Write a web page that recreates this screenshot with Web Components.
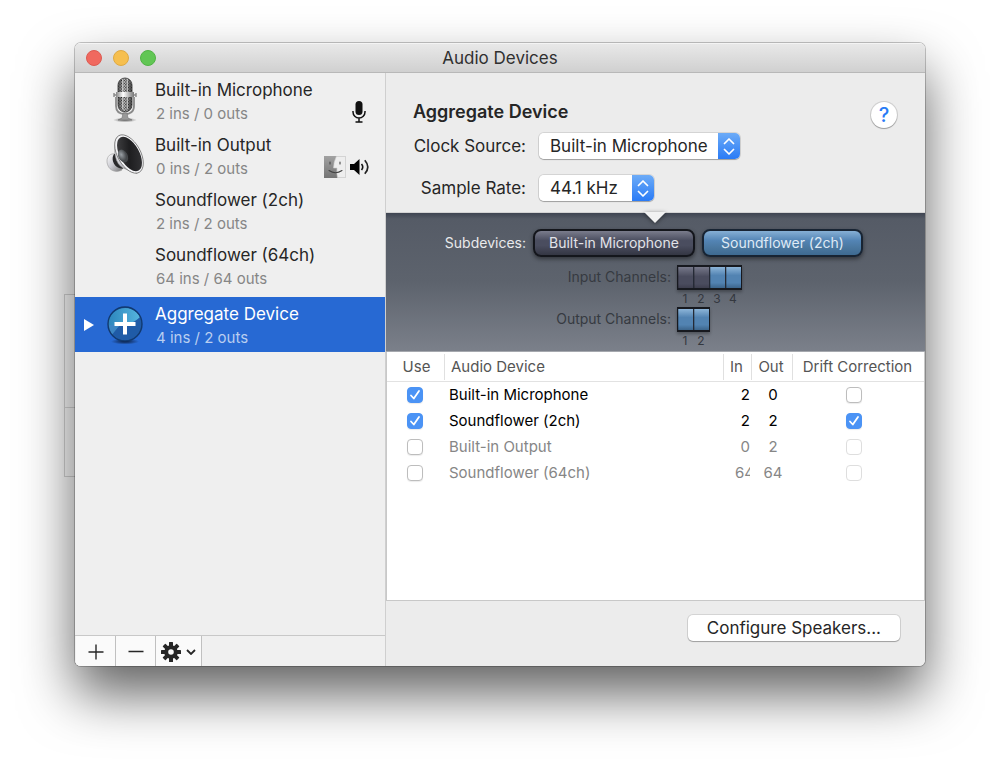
<!DOCTYPE html>
<html lang="en">
<head>
<meta charset="utf-8">
<meta name="viewport" content="width=device-width, initial-scale=1">
<title>Audio Devices</title>
<style>
  html { background: #fff; }
  body {
    margin: 0; box-sizing: border-box; min-height: 100vh;
    padding: 43px 75px 107px; display: flex;
    font-family: Inter, "Liberation Sans", sans-serif; font-size: 17px; line-height: 24px; color: #262626;
  }
</style>
</head>
<body>
<audio-window heading="Audio Devices">
  <device-list slot="sidebar">
    <device-item name="Built-in Microphone" detail="2 ins / 0 outs">
      <ui-icon slot="icon" name="studio-mic"></ui-icon>
      <ui-icon slot="status" name="mic"></ui-icon>
    </device-item>
    <device-item name="Built-in Output" detail="0 ins / 2 outs">
      <ui-icon slot="icon" name="speaker"></ui-icon>
      <ui-icon slot="status" name="face"></ui-icon>
      <ui-icon slot="status" name="volume"></ui-icon>
    </device-item>
    <device-item name="Soundflower (2ch)" detail="2 ins / 2 outs"></device-item>
    <device-item name="Soundflower (64ch)" detail="64 ins / 64 outs"></device-item>
    <device-item name="Aggregate Device" detail="4 ins / 2 outs" selected>
      <ui-icon slot="icon" name="aggregate"></ui-icon>
    </device-item>
  </device-list>
  <list-toolbar slot="sidebar"></list-toolbar>

  <device-settings slot="main" heading="Aggregate Device"></device-settings>
  <subdevice-panel slot="main"></subdevice-panel>
  <device-table slot="main"></device-table>
  <action-footer slot="main">Configure Speakers...</action-footer>
</audio-window>

<script>
const define = (name, render) => customElements.define(name, class extends HTMLElement {
  constructor() { super(); this.attachShadow({ mode: "open" }); }
  connectedCallback() { this.shadowRoot.innerHTML = render(this); }
});

/* Icons */
const gearTeeth = Array.from({ length: 8 }, (_, i) =>
  `<rect x="8" y="0" width="4" height="5" rx=".6" transform="rotate(${i * 45} 10 10)"/>`).join("");
const icons = {
  "studio-mic": [24, 48, `
    <defs>
      <linearGradient id="m"><stop offset="0" stop-color="#555"/><stop offset=".45" stop-color="#c8c8c8"/><stop offset="1" stop-color="#484848"/></linearGradient>
      <linearGradient id="b"><stop offset="0" stop-color="#888"/><stop offset=".4" stop-color="#fff"/><stop offset="1" stop-color="#777"/></linearGradient>
      <pattern id="d" width="2" height="2" patternUnits="userSpaceOnUse" patternTransform="rotate(45)"><rect width="1.1" height="1.1" fill="#222"/></pattern>
      <radialGradient id="s"><stop offset="0" stop-color="#444" stop-opacity=".8"/><stop offset="1" stop-color="#444" stop-opacity="0"/></radialGradient>
    </defs>
    <ellipse cx="12" cy="43" rx="12" ry="2.4" fill="url(#s)"/>
    <path d="M3 20v9c0 6 4 8 9 8s9-2 9-8v-9" fill="none" stroke="#8a8a8a" stroke-width="1.8"/>
    <path d="M10 36h4l1 5 4 2H5l4-2z" fill="#999" stroke="#666" stroke-width=".5"/>
    <rect x="5" y="1" width="14" height="34" rx="7" fill="url(#m)" stroke="#555"/>
    <rect x="5" y="1" width="14" height="34" rx="7" fill="url(#d)"/>
    <path d="M9.5 2v30M14.5 2v30" stroke="#ddd" stroke-width=".7"/>
    <rect x="3" y="15" width="18" height="5" fill="url(#b)"/>
    <path d="M1 16v4M23 16v4M1 18h2M21 18h2" stroke="#888" stroke-width="1.4"/>`],
  speaker: [38, 46, `
    <defs>
      <linearGradient id="r" x2="1" y2="1"><stop offset="0" stop-color="#fff"/><stop offset=".5" stop-color="#c9c9d0"/><stop offset="1" stop-color="#777"/></linearGradient>
      <linearGradient id="k" x2="1" y2="1"><stop offset="0" stop-color="#4b4b4d"/><stop offset=".5" stop-color="#1e1e20"/><stop offset="1" stop-color="#38383b"/></linearGradient>
      <radialGradient id="c" cx=".4" cy=".35"><stop offset="0" stop-color="#9aa0a5"/><stop offset="1" stop-color="#45484b"/></radialGradient>
    </defs>
    <path d="M9 21c-4-1-8 2-8 7s3 9 7 10c3 1 6 0 8-1l-4-14z" fill="url(#r)" stroke="#999" stroke-width=".6"/>
    <path d="M8 21c-3 4-1 12 5 14l4 1-4-15z" fill="#29292b"/>
    <path d="M10 6C7 18 9 31 17 35l14 5.500L14 2z" fill="url(#r)" stroke="#777" stroke-width=".5"/>
    <ellipse cx="23" cy="21" rx="11.500" ry="21" transform="rotate(-29 23 21)" fill="#f3f3f5" stroke="#777" stroke-width=".8"/>
    <ellipse cx="23.500" cy="21" rx="9.700" ry="18.800" transform="rotate(-29 23.500 21)" fill="url(#k)"/>
    <ellipse cx="17" cy="23" rx="4.600" ry="6.800" transform="rotate(-28 17 23)" fill="url(#c)"/>`],
  aggregate: [38, 40, `
    <defs>
      <linearGradient id="h" x2="1" y2="0"><stop offset="0" stop-color="#2c85bc"/><stop offset="1" stop-color="#55b5de"/></linearGradient>
      <radialGradient id="s"><stop offset="0" stop-color="#08152f" stop-opacity=".9"/><stop offset="1" stop-color="#08152f" stop-opacity="0"/></radialGradient>
    </defs>
    <ellipse cx="19" cy="36.5" rx="14" ry="3" fill="url(#s)"/>
    <circle cx="19" cy="19" r="17" fill="#1f5ba7"/>
    <path d="M2 20a17 17 0 0 1 32-8Q29 17 24 18T14 21z" fill="url(#h)"/>
    <path d="M2 20h12Q8 27 6 30 2 25 2 20" fill="#3b86c4"/>
    <circle cx="19" cy="19" r="17" fill="none" stroke="#11396f" stroke-width="1.4"/>
    <path d="M19 8.500v21M8.500 19h21" stroke="#fff" stroke-width="4"/>`],
  mic: [20, 22, `<g transform="translate(2)"><rect x="3.500" y="0" width="7" height="14" rx="3.500" fill="#111"/>
    <path d="M1 10v1a6 6 0 0 0 12 0v-1M7 17v3.500M3.500 21h7" fill="none" stroke="#111" stroke-width="1.5"/></g>`],
  face: [22, 22, `<defs><linearGradient id="f" x2="0" y2="1"><stop offset="0" stop-color="#a2a2a2"/><stop offset="1" stop-color="#747474"/></linearGradient></defs>
    <rect x=".5" y=".5" width="21" height="21" fill="#eee" stroke="#d4d4d4"/>
    <path d="M0 0h12.500Q9.500 6 9.500 12H13q-.5 4 .5 10H0z" fill="url(#f)"/>
    <path d="M12.500 0Q9.500 6 9.500 12H13q-.5 5 .5 10" fill="none" stroke="#ccc" stroke-width=".6"/>
    <path d="M6 6v2M16 6v2M5 14.500q6.500 4.500 13 0" fill="none" stroke="#444" stroke-width="1.1" stroke-linecap="round"/>`],
  volume: [20, 16, `<path d="M0 5h4l5.500-5v16L4 11H0z" fill="#050505"/>
    <path d="M11.500 5q2.500 3 0 6" fill="none" stroke="#111" stroke-width="1.600"/>
    <path d="M14.800 1.200q6 6.800 0 13.600" fill="none" stroke="#222" stroke-width="1.700"/>`],
  add: [16, 16, `<path d="M8 .5v15M.5 8h15" stroke="#262626" stroke-width="1.400"/>`],
  remove: [16, 16, `<path d="M.5 7.500h15" stroke="#262626" stroke-width="1.400"/>`],
  gear: [20, 20, `<g fill="#262626">${gearTeeth}</g><circle cx="10" cy="10" r="4.800" fill="none" stroke="#262626" stroke-width="4"/>`],
  down: [10, 6, `<path d="M1 1l4 4 4-4" fill="none" stroke="#262626" stroke-width="1.800"/>`],
  disclosure: [10, 12, `<path d="M0 0l10 6-10 6z" fill="#fff"/>`],
  updown: [12, 17, `<path d="M1.500 5.500L6 1l4.500 4.500M1.500 11.500L6 16l4.500-4.500" fill="none" stroke="#fff" stroke-width="1.700" stroke-linecap="round" stroke-linejoin="round"/>`]
};
define("ui-icon", el => {
  const [w, h, body] = icons[el.getAttribute("name")];
  return `<style>:host{display:block;flex:none;width:${w}px;height:${h}px}svg{display:block}</style>
    <svg width="${w}" height="${h}" viewBox="0 0 ${w} ${h}" aria-hidden="true">${body}</svg>`;
});

/* Window frame */
define("audio-window", el => `
  <style>
    :host { display: flex; flex-direction: column; flex: 1; min-width: 0; position: relative; }
    .behind { position: absolute; z-index: -1; left: -11px; top: 251px; width: 60px; height: 183px; box-sizing: border-box; border: 1px solid rgba(0,0,0,.16); }
    .behind::after { content: ""; display: block; height: 112px; border-bottom: 1px solid rgba(0,0,0,.14); }
    .frame { flex: 1; display: flex; flex-direction: column; border-radius: 6px; overflow: hidden; background: #ececec; }
    .shade { position: absolute; inset: 0; z-index: -2; border-radius: 6px; box-shadow: 0 0 0 1px rgba(0,0,0,.22), 0 28px 54px rgba(0,0,0,.62); }
    header { display: grid; grid-template-columns: 1fr auto 1fr; align-items: center; height: 29px; padding: 0 11px; border-bottom: 1px solid #b8b8b8;
      background: linear-gradient(#e9e9e9, #d0d0d0); box-shadow: inset 0 1px #f4f4f4; }
    .lights { display: flex; gap: 11px; }
    .lights button { width: 16px; height: 16px; padding: 0; border-radius: 50%; border: 1px solid #dd5a51; background: #f0695f; }
    .lights button:nth-child(2) { border-color: #dfaa43; background: #f6bf4f; }
    .lights button:nth-child(3) { border-color: #51b345; background: #61c654; }
    h1 { margin: 0; font-size: 17px; line-height: 24px; font-weight: 400; color: #303030; }
    .columns { flex: 1; display: grid; grid-template-columns: 311px minmax(0, 1fr); }
    aside { display: flex; flex-direction: column; background: #efefef; border-right: 1px solid #cfcfcf; }
    main { display: flex; flex-direction: column; min-width: 0; }
  </style>
  <div class="shade"></div><div class="behind"></div>
  <div class="frame">
    <header>
      <div class="lights"><button aria-label="Close"></button><button aria-label="Minimize"></button><button aria-label="Zoom"></button></div>
      <h1>${el.getAttribute("heading")}</h1>
    </header>
    <div class="columns">
      <aside><slot name="sidebar"></slot></aside>
      <main><slot name="main"></slot></main>
    </div>
  </div>`);

define("device-list", () => `<style>:host{display:flex;flex-direction:column;flex:1}</style><slot></slot>`);

define("device-item", el => `
  <style>
    :host { display: grid; grid-template-columns: 28px 44px 1fr auto; height: 55px; padding-right: 15px; }
    :host([selected]) { margin-top: 4px; background: #2769d3; color: #fff; }
    .arrow, .icon { display: grid; place-items: center; }
    .text { padding: 5px 0 0 8px; min-width: 0; white-space: nowrap; }
    .name { line-height: 24px; }
    .detail { font-size: 15px; line-height: 24px; padding-left: 1px; color: #868686; }
    :host([selected]) .detail { color: #b9cef0; }
    .status { display: flex; align-items: center; gap: 4px; align-self: end; height: 32px; }
  </style>
  <div class="arrow">${el.hasAttribute("selected") ? '<ui-icon name="disclosure"></ui-icon>' : ""}</div>
  <div class="icon"><slot name="icon"></slot></div>
  <div class="text"><div class="name">${el.getAttribute("name")}</div><div class="detail">${el.getAttribute("detail")}</div></div>
  <div class="status"><slot name="status"></slot></div>`);

define("list-toolbar", () => `
  <style>
    :host { display: flex; height: 30px; border-top: 1px solid #c8c8c8; padding-left: 1px; background: #f0f0f0; }
    button { display: flex; box-sizing: border-box; align-items: center; justify-content: center; gap: 5px; width: 40px; padding: 2px 0 0; border: 0; border-right: 1px solid #c0c0c0; background: #fafafa; }
    button:last-child { width: 46px; }
  </style>
  <button aria-label="Add device"><ui-icon name="add"></ui-icon></button>
  <button aria-label="Remove device"><ui-icon name="remove"></ui-icon></button>
  <button aria-label="Device actions"><ui-icon name="gear"></ui-icon><ui-icon name="down"></ui-icon></button>`);

/* Settings form */
define("popup-select", el => `
  <style>
    :host { display: block; position: relative; width: fit-content; border-radius: 5px; box-shadow: 0 0 0 1px rgba(0,0,0,.1), 0 1px 1px rgba(0,0,0,.25); }
    select { display: block; appearance: none; margin: 0; border: 0; border-radius: 5px; height: 26px; padding: 0 30px 0 11px; background: #fff; color: #262626; font: inherit; width: var(--select-width, auto); }
    span { position: absolute; right: 0; top: 0; bottom: 0; width: 22px; display: grid; place-items: center; pointer-events: none;
      border-radius: 0 5px 5px 0; background: linear-gradient(#6cabf7, #2a7bf6); }
  </style>
  <select aria-label="${el.getAttribute("label")}"><option>${el.getAttribute("value")}</option></select>
  <span><ui-icon name="updown"></ui-icon></span>`);

define("device-settings", el => `
  <style>
    :host { display: flex; justify-content: space-between; align-items: flex-start; box-sizing: border-box; height: 140px; padding: 27px 28px 0 27px; border-bottom: 1px solid #d4d4d4; }
    h2 { margin: 0 0 9px; font-size: 18px; line-height: 24px; font-weight: 600; }
    .form { display: grid; grid-template-columns: 113px auto; column-gap: 13px; row-gap: 16px; align-items: center; }
    .form > span { text-align: right; white-space: nowrap; }
    .rate { --select-width: 115px; }
    .clock { --select-width: 201px; }
    .help { width: 26px; height: 26px; margin-top: 2px; padding: 0; border: 0; border-radius: 50%; background: #fff; color: #2a7bf6; font: inherit; font-weight: 500; font-size: 20px; line-height: 26px;
      box-shadow: 0 0 0 1px rgba(0,0,0,.12), 0 1px 1px rgba(0,0,0,.25); }
  </style>
  <div>
    <h2>${el.getAttribute("heading")}</h2>
    <div class="form">
      <span>Clock Source:</span><popup-select class="clock" label="Clock Source" value="Built-in Microphone"></popup-select>
      <span>Sample Rate:</span><popup-select class="rate" label="Sample Rate" value="44.1 kHz"></popup-select>
    </div>
  </div>
  <button class="help" aria-label="Help">?</button>`);

/* Subdevices and channels */
define("channel-strip", el => {
  const kinds = el.getAttribute("kinds").split(" ");
  return `<style>
    :host { display: block; }
    .cells { display: flex; width: fit-content; border: 1px solid #17191f; border-width: 2px 1px; background: #252a36; box-shadow: 0 2px 3px rgba(0,0,0,.3); gap: 1px; }
    i { width: 15px; height: 21px; box-shadow: inset 1px 0 rgba(0,0,0,.2); background: linear-gradient(#767889, #4a4c5e 45%, #4a4c5e 80%, #3d3e4e); }
    i.blue { background: linear-gradient(#8db5d9, #5283b2 40%, #5283b2 75%, #3c658c); }
    ol { display: flex; margin: 0; padding: 2px 0 0; list-style: none; font-size: 12px; line-height: 14px; color: #34383f; }
    li { width: 16px; text-align: center; }
  </style>
  <div class="cells">${kinds.map(k => `<i class="${k}"></i>`).join("")}</div>
  <ol>${kinds.map((_, i) => `<li>${i + 1}</li>`).join("")}</ol>`;
});

define("subdevice-panel", () => `
  <style>
    :host { display: block; position: relative; box-sizing: border-box; height: 139px; padding-top: 16px; border-bottom: 1px solid #a5a8ae;
      background: linear-gradient(#3f4552, #555b66 6px, #5d636d 50%, #7b808a); font-size: 14px; line-height: 18px; }
    .pointer { position: absolute; left: 258px; top: -1px; width: 22px; height: 11px; display: block; filter: drop-shadow(0 1px 2px rgba(0,0,0,.5)); }
    .subs { display: grid; grid-template-columns: 140px 162px 161px; column-gap: 7px; align-items: center; height: 28px; }
    .subs > span { text-align: right; color: #e9eaec; }
    .subs button { height: 28px; margin: 0; padding: 0; border: 2px solid #14161c; border-radius: 8px; color: #e2e3e8; font: inherit; box-shadow: 0 2px 4px rgba(0,0,0,.45);
      background: linear-gradient(#7a7c8c, #4a4d5f 40%, #4a4d5f 60%, #343643); }
    .subs button.blue { border-color: #182433; color: #dfeaf5; background: linear-gradient(#86afd5, #5384b4 40%, #4a779f 70%, #3e6a91); }
    .channels { display: grid; grid-template-columns: 285px auto; column-gap: 6px; margin-top: 8px; }
    .channels + .channels { margin-top: 1px; }
    .channels > span { text-align: right; color: #363a41; padding-top: 3px; }
  </style>
  <svg class="pointer" viewBox="0 0 22 11" aria-hidden="true"><path d="M0 0h22L11 11z" fill="#f2f2f2"/></svg>
  <div class="subs"><span>Subdevices:</span><button>Built-in Microphone</button><button class="blue">Soundflower (2ch)</button></div>
  <div class="channels"><span>Input Channels:</span><channel-strip kinds="dark dark blue blue"></channel-strip></div>
  <div class="channels"><span>Output Channels:</span><channel-strip kinds="blue blue"></channel-strip></div>`);

/* Device table */
const devices = [
  { name: "Built-in Microphone", ins: 2, outs: 0, use: true, drift: false, on: true },
  { name: "Soundflower (2ch)", ins: 2, outs: 2, use: true, drift: true, on: true },
  { name: "Built-in Output", ins: 0, outs: 2, use: false, drift: false, on: false },
  { name: "Soundflower (64ch)", ins: 64, outs: 64, use: false, drift: false, on: false }
];
define("device-table", () => `
  <style>
    :host { display: block; flex: 1; background: #fff; border: 1px solid #c8c8c8; border-top: 0; font-size: 15px; line-height: 20px; }
    table { width: 100%; table-layout: fixed; border-collapse: collapse; }
    .use { width: 57px; } .in { width: 28px; } .out { width: 41px; } .drift { width: 132px; }
    th { height: 29px; padding: 0; font-weight: 400; color: #555; border-bottom: 1px solid #e2e2e2; white-space: nowrap; }
    th > span { display: block; border-left: 1px solid #e0e0e0; line-height: 26px; padding-right: 2px; }
    th:first-child > span { border-left: 0; padding: 0 0 0 2px; }
    th:nth-child(2) > span { text-align: left; padding-left: 6px; }
    td { height: 26px; padding: 0; text-align: center; color: #000; }
    td:nth-child(2) { text-align: left; padding-left: 5px; }
    td:nth-child(3) > span { display: block; width: 15px; margin-left: 12px; overflow: hidden; text-align: right; white-space: nowrap; }
    td.wide:nth-child(3) > span { text-align: left; }
    td:nth-child(4) { padding-left: 3px; }
    td:nth-child(5) { padding-right: 8px; }
    td:first-child { padding-right: 2px; }
    tr.off td { color: #868686; }
    input { appearance: none; display: block; box-sizing: border-box; margin: 0 auto; width: 16px; height: 16px; border: 1px solid #bdbdbd; border-radius: 4px; background: #fff; box-shadow: 0 1px 1px rgba(0,0,0,.08); }
    input:disabled { border-color: #dedede; box-shadow: none; }
    input:checked { border-color: #4b93f5; background: #4b93f5 url("data:image/svg+xml,%3Csvg xmlns='http://www.w3.org/2000/svg' viewBox='0 0 14 14'%3E%3Cpath d='M3 7.500l2.800 3L11 3' fill='none' stroke='white' stroke-width='1.800' stroke-linecap='round' stroke-linejoin='round'/%3E%3C/svg%3E") center / 14px 14px no-repeat; }
  </style>
  <table>
    <thead><tr>
      <th class="use"><span>Use</span></th><th><span>Audio Device</span></th><th class="in"><span>In</span></th><th class="out"><span>Out</span></th><th class="drift"><span>Drift Correction</span></th>
    </tr></thead>
    <tbody>${devices.map(d => `
      <tr class="${d.on ? "" : "off"}">
        <td><input type="checkbox" aria-label="Use ${d.name}" ${d.use ? "checked" : ""}></td>
        <td>${d.name}</td>
        <td class="${d.ins > 9 ? "wide" : ""}"><span>${d.ins}</span></td>
        <td>${d.outs}</td>
        <td><input type="checkbox" aria-label="Drift correction for ${d.name}" ${d.drift ? "checked" : ""} ${d.on ? "" : "disabled"}></td>
      </tr>`).join("")}</tbody>
  </table>`);

define("action-footer", () => `
  <style>
    :host { display: flex; justify-content: flex-end; align-items: flex-start; box-sizing: border-box; height: 65px; padding: 14px 25px 0; }
    button { height: 26px; padding: 0 19px; border: 0; border-radius: 5px; background: #fff; color: #262626; font: inherit; box-shadow: 0 0 0 1px rgba(0,0,0,.1), 0 1px 1px rgba(0,0,0,.25); }
  </style>
  <button><slot></slot></button>`);
</script>
</body>
</html>
